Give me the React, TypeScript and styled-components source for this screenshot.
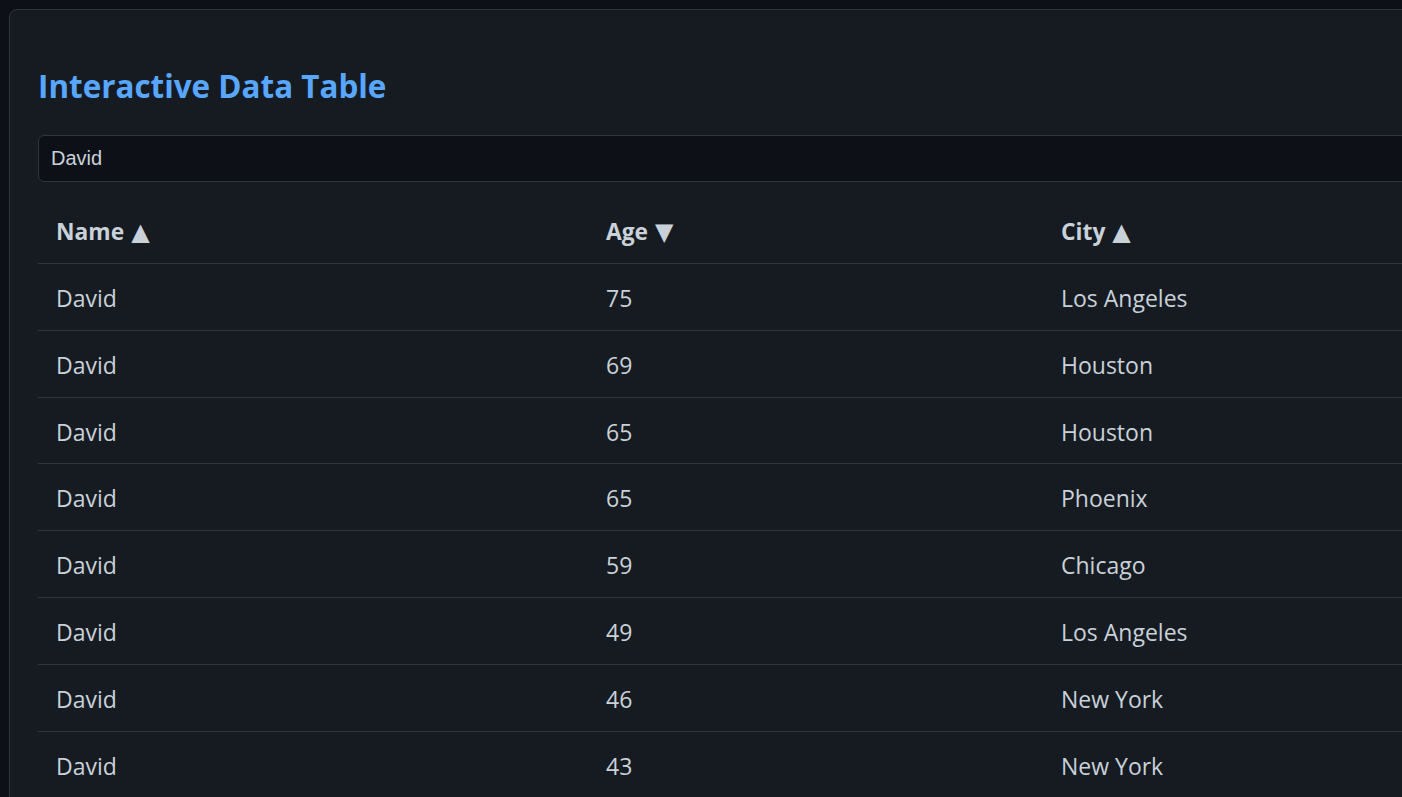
import React, { useMemo, useState } from "react";
import styled, { createGlobalStyle } from "styled-components";

const Global = createGlobalStyle`
  html, body {
    margin: 0;
    padding: 0;
    background: #0d1117;
    overflow: hidden;
  }
  * { box-sizing: border-box; }
`;

const Page = styled.div`
  padding: 9px;
  background: #0d1117;
  min-height: 100vh;
  font-family: "Open Sans", "Noto Sans", sans-serif;
`;

const Card = styled.div`
  width: 1560px;
  background: #161b22;
  border: 1px solid #30363d;
  border-radius: 8px;
  padding: 28px;
`;

const Title = styled.h1`
  margin: 28px 0 29px;
  font-size: 31.4px;
  line-height: 40px;
  font-weight: 700;
  color: #58a6ff;
`;

const Search = styled.input`
  display: block;
  width: 100%;
  height: 47px;
  padding: 0 12px;
  background: #0d1117;
  border: 1px solid #30363d;
  border-radius: 6px;
  color: #c9d1d9;
  font-family: "Liberation Sans", Arial, sans-serif;
  font-size: 20px;
  outline: none;
`;

const Table = styled.table`
  width: 100%;
  margin-top: 20px;
  border-collapse: collapse;
  table-layout: fixed;
`;

const Th = styled.th`
  text-align: left;
  padding: 16px 18px 17px;
  line-height: 28px;
  font-size: 22.8px;
  font-weight: 700;
  color: #c9d1d9;
  border-bottom: 1px solid #30363d;
  cursor: pointer;
  white-space: nowrap;
`;

const Arrow = styled.span`
  font-family: "DejaVu Sans", sans-serif;
  font-size: 24px;
  line-height: 0;
  margin-left: 7px;
`;

const Td = styled.td`
  padding: 22px 18px 18px;
  line-height: 25.8px;
  font-size: 23px;
  color: #c9d1d9;
  border-bottom: 1px solid #30363d;
`;

type Row = { name: string; age: number; city: string };

const rows: Row[] = [
  { name: "David", age: 75, city: "Los Angeles" },
  { name: "David", age: 69, city: "Houston" },
  { name: "David", age: 65, city: "Houston" },
  { name: "David", age: 65, city: "Phoenix" },
  { name: "David", age: 59, city: "Chicago" },
  { name: "David", age: 49, city: "Los Angeles" },
  { name: "David", age: 46, city: "New York" },
  { name: "David", age: 43, city: "New York" },
  { name: "David", age: 38, city: "Chicago" },
  { name: "David", age: 31, city: "Phoenix" },
];

export default function App() {
  const [query, setQuery] = useState("David");
  const filtered = useMemo(
    () => rows.filter((r) => r.name.toLowerCase().includes(query.toLowerCase())),
    [query]
  );
  return (
    <>
      <Global />
      <Page>
        <Card>
          <Title>Interactive Data Table</Title>
          <Search value={query} onChange={(e) => setQuery(e.target.value)} />
          <Table>
            <colgroup>
              <col style={{ width: 550 }} />
              <col style={{ width: 455 }} />
              <col />
            </colgroup>
            <thead>
              <tr>
                <Th>Name<Arrow>▲</Arrow></Th>
                <Th>Age<Arrow>▼</Arrow></Th>
                <Th>City<Arrow>▲</Arrow></Th>
              </tr>
            </thead>
            <tbody>
              {filtered.map((r, i) => (
                <tr key={i}>
                  <Td>{r.name}</Td>
                  <Td>{r.age}</Td>
                  <Td>{r.city}</Td>
                </tr>
              ))}
            </tbody>
          </Table>
        </Card>
      </Page>
    </>
  );
}
